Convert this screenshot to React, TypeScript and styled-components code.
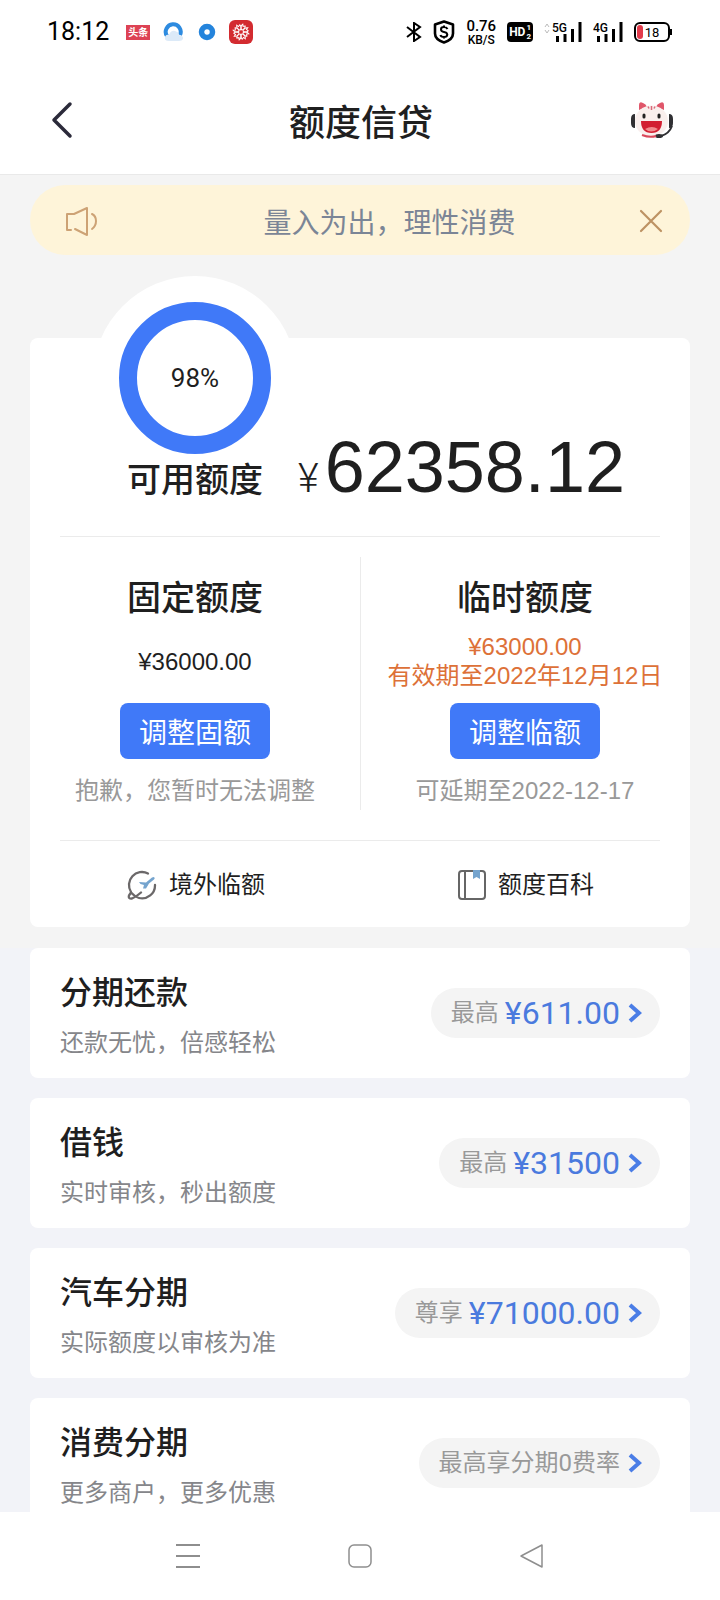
import React from "react";
import styled, { createGlobalStyle } from "styled-components";

const sans = `"Liberation Sans", "Noto Sans CJK SC", sans-serif`;
const ui = `Roboto, "Noto Sans CJK SC", sans-serif`;

const GlobalStyle = createGlobalStyle`
  *, *::before, *::after { box-sizing: border-box; }
  body { margin: 0; background: #f4f4f4; color: #1f1f1f; font-family: ${sans}; }
  button { margin: 0; padding: 0; border: 0; background: none; color: inherit; font: inherit; cursor: pointer; }
  a { color: inherit; text-decoration: none; }
  h1, h2, h3, p { margin: 0; font-weight: 400; }
  svg { display: block; flex: none; }
`;

const Screen = styled.div`
  display: flex;
  flex-direction: column;
  height: 100vh;
`;

const StatusBar = styled.header`
  display: flex;
  justify-content: space-between;
  align-items: center;
  flex: none;
  height: 64px;
  padding: 0 50px 0 47px;
  background: #fff;
  color: #000;
  font-family: ${ui};
`;

const StatusGroup = styled.div<{ $gap: number }>`
  display: flex;
  align-items: center;
  gap: ${(p) => p.$gap}px;
`;

const Clock = styled.time`
  font-size: 25px;
  line-height: 32px;
`;

const NewsBadge = styled.span`
  padding: 0 2px;
  background: #dd4254;
  color: #fff;
  font-size: 10px;
  font-weight: 700;
  line-height: 15px;
`;

const NetSpeed = styled.div`
  display: flex;
  flex-direction: column;
  align-items: center;
`;

const SpeedValue = styled.span`
  font-size: 15px;
  font-weight: 500;
  line-height: 15px;
`;

const SpeedUnit = styled.span`
  font-size: 12px;
  font-weight: 500;
  line-height: 12px;
`;

const HdBadge = styled.span`
  display: flex;
  align-items: center;
  gap: 1px;
  height: 20px;
  padding: 0 2px;
  border-radius: 4px;
  background: #000;
  color: #fff;
  font-size: 12px;
  font-weight: 700;
`;

const HdLines = styled.span`
  display: flex;
  flex-direction: column;
  font-size: 8px;
  line-height: 9px;
`;

const Signal = styled.div`
  position: relative;
  display: flex;
  align-items: flex-end;
  justify-content: flex-end;
  width: 30px;
  height: 20px;
`;

const SignalLabel = styled.span`
  position: absolute;
  top: 0;
  left: 0;
  font-size: 12px;
  font-weight: 500;
  line-height: 12px;
`;

const Battery = styled.div`
  position: relative;
  display: flex;
  align-items: center;
  justify-content: center;
  width: 36px;
  height: 20px;
  border: 2px solid #000;
  border-radius: 6px;
  font-size: 13px;

  &::before {
    content: "";
    position: absolute;
    top: 1px;
    bottom: 1px;
    left: 1px;
    width: 6px;
    border-radius: 3px;
    background: #e23b4b;
  }

  &::after {
    content: "";
    position: absolute;
    top: 5px;
    right: -4px;
    width: 2px;
    height: 6px;
    background: #000;
  }
`;

const TitleBar = styled.div`
  display: grid;
  grid-template-columns: 1fr auto 1fr;
  align-items: center;
  flex: none;
  height: 111px;
  padding: 2px 46px 0 48px;
  border-bottom: 1px solid #e9e9e9;
  background: #fff;
`;

const PageTitle = styled.h1`
  padding-top: 8px;
  font-size: 36px;
  font-weight: 500;
  line-height: 44px;
`;

const IconButton = styled.button<{ $align?: "start" | "center" | "end" }>`
  justify-self: ${(p) => p.$align ?? "center"};
`;

const Content = styled.main`
  flex: 1;
  min-height: 0;
  overflow: hidden;
  background: #f2f3f8;
`;

const Overview = styled.div`
  padding: 10px 30px 21px;
  background: #f4f4f4;
`;

const Notice = styled.div`
  display: flex;
  align-items: center;
  height: 70px;
  padding: 2px 26px 0 35px;
  border-radius: 35px;
  background: #fef4d9;
  color: #7b8596;
`;

const NoticeText = styled.p`
  flex: 1;
  padding: 6px 0 0 42px;
  font-size: 28px;
  line-height: 40px;
  text-align: center;
`;

const QuotaCard = styled.section`
  isolation: isolate;
  margin-top: 83px;
  border-radius: 8px;
  background: #fff;
`;

const Summary = styled.div`
  display: grid;
  grid-template-columns: 152px auto;
  justify-content: start;
  align-items: baseline;
  column-gap: 27px;
  padding: 0 30px 36px 89px;
`;

const Ring = styled.div`
  position: relative;
  grid-column: 1 / -1;
  display: flex;
  align-items: center;
  justify-content: center;
  width: 152px;
  height: 152px;
  margin: -36px 0 -7px;
  border: 18px solid #4079f8;
  border-radius: 50%;
  font-family: ${ui};
  font-size: 26px;

  &::before {
    content: "";
    position: absolute;
    z-index: -1;
    inset: -44px;
    border-radius: 50%;
    background: #fff;
  }
`;

const QuotaTitle = styled.h2`
  font-size: 34px;
  font-weight: 500;
  line-height: 40px;
  text-align: center;
  white-space: nowrap;
`;

const Amount = styled.p`
  font-size: 72px;
  line-height: 40px;
  white-space: nowrap;
`;

const Currency = styled.span`
  margin-right: 6px;
  font-family: ${ui};
  font-size: 40px;
  font-weight: 300;
`;

const Rule = styled.hr`
  height: 1px;
  margin: 0 30px;
  border: 0;
  background: #ebebeb;
`;

const Split = styled.div`
  position: relative;
  display: grid;
  grid-template-columns: 1fr 1fr;
  padding: 41px 0 33px;

  &::after {
    content: "";
    position: absolute;
    top: 20px;
    bottom: 30px;
    left: 50%;
    width: 1px;
    background: #ebebeb;
  }
`;

const QuotaColumn = styled.div`
  display: flex;
  flex-direction: column;
  align-items: center;
`;

const QuotaValue = styled.p<{ $accent?: boolean }>`
  display: flex;
  flex-direction: column;
  align-items: center;
  justify-content: center;
  height: 58px;
  margin: 14px 0 13px;
  color: ${(p) => (p.$accent ? "#dd7138" : "#1f1f1f")};
  font-size: 24px;
  line-height: 29px;
  white-space: nowrap;
`;

const AdjustButton = styled.button`
  width: 150px;
  height: 56px;
  padding-top: 5px;
  border-radius: 8px;
  background: #4079f8;
  color: #fff;
  font-size: 28px;
  line-height: 40px;
`;

const Hint = styled.p`
  margin-top: 16px;
  color: #999;
  font-size: 24px;
  line-height: 32px;
`;

const Shortcuts = styled.nav`
  display: grid;
  grid-template-columns: 1fr 1fr;
`;

const Shortcut = styled.a`
  display: flex;
  align-items: center;
  justify-content: center;
  gap: 12px;
  height: 86px;
  padding: 2px 0 0 2px;
  font-size: 24px;
  line-height: 32px;
`;

const ProductList = styled.div`
  display: flex;
  flex-direction: column;
  gap: 20px;
  padding: 0 30px 20px;
`;

const ProductCard = styled.article`
  display: flex;
  align-items: center;
  justify-content: space-between;
  height: 130px;
  padding: 0 30px;
  border-radius: 8px;
  background: #fff;
`;

const ProductText = styled.div`
  padding-top: 4px;
`;

const ProductName = styled.h3`
  font-size: 32px;
  font-weight: 500;
  line-height: 44px;
`;

const ProductNote = styled.p`
  margin-top: 12px;
  color: #85868a;
  font-size: 24px;
  line-height: 32px;
`;

const OfferPill = styled.a`
  display: flex;
  align-items: center;
  height: 50px;
  padding: 0 18px 0 20px;
  border-radius: 25px;
  background: #f4f4f4;
  color: #999;
  font-family: ${ui};
  font-size: 24px;
  line-height: 32px;
`;

const OfferAmount = styled.strong`
  margin-left: 6px;
  color: #4a7ade;
  font-size: 32px;
  font-weight: 400;
`;

const PillArrow = styled.svg`
  margin-left: 8px;
`;

const SystemNav = styled.nav`
  display: grid;
  grid-template-columns: repeat(3, 172px);
  justify-content: center;
  align-items: center;
  flex: none;
  height: 88px;
  background: #fff;
`;

const Bars = () => (
  <svg width="26" height="20" viewBox="0 0 26 20">
    <path d="M1.500 14v6M9 12v8M16.500 7v13M24 0v20" stroke="#000" strokeWidth="3" />
  </svg>
);

const BrowserIcon = () => (
  <svg width="22" height="22" viewBox="0 0 22 22">
    <path d="M4 15A7.500 7.500 0 1 1 17 14" fill="none" stroke="#2d8be0" strokeWidth="4" />
    <path d="M6 20q-5 0-4-4 1-3 4-2 2-5 6-4 4 1 4 4 5 1 4 4-1 2-4 2z" fill="#dceaf8" />
  </svg>
);

const DotIcon = () => (
  <svg width="18" height="18" viewBox="0 0 18 18">
    <circle cx="9" cy="9" r="5.500" fill="none" stroke="#2484dc" strokeWidth="5.500" />
  </svg>
);

const HuaweiIcon = () => (
  <svg width="24" height="24" viewBox="0 0 24 24">
    <rect width="24" height="24" rx="6" fill="#d32b30" />
    <g fill="none" stroke="#fff" strokeWidth="1">
      {[20, 65, 110, 155, 200, 245, 290, 335].map((angle) => (
        <path key={angle} d="M12 10q-3-3-1-6l1 2 2-1q1 3-2 5" transform={`rotate(${angle} 12 12)`} />
      ))}
    </g>
  </svg>
);

const BluetoothIcon = () => (
  <svg width="16" height="20" viewBox="0 0 16 20" fill="none" stroke="#000" strokeWidth="2">
    <path d="M1 5l13 10-6 4V1l6 4L1 15" />
  </svg>
);

const ShieldIcon = () => (
  <svg width="22" height="24" viewBox="0 0 22 24" fill="none" stroke="#000">
    <path d="M11 1.500l9 3v9q0 6-9 9-9-3-9-9v-9z" strokeWidth="2.600" strokeLinejoin="round" />
    <path d="M14.500 9q-1-2-3.500-2-3 0-3 2.300T11 12t3.300 2.600Q14 17 11 17t-3.600-2M11 5.500V7M11 17v1.500" strokeWidth="2" />
  </svg>
);

const BackIcon = () => (
  <svg width="28" height="40" viewBox="0 0 28 40">
    <path d="M22 4L6 20l16 16" fill="none" stroke="#2b2a3a" strokeWidth="3.500" strokeLinecap="round" strokeLinejoin="round" />
  </svg>
);

const MascotIcon = () => (
  <svg width="44" height="38" viewBox="0 0 44 38">
    <path d="M9 9V4q0-4 4-2 3 1 4 4zM34 9V4q0-4-4-2-3 1-4 4z" fill="#e0566a" />
    <ellipse cx="21.500" cy="20" rx="16.500" ry="15.500" fill="#f9efed" />
    <path d="M18 5.500l1 2M21.500 5v4M25 5.500l-1 2" stroke="#d9697a" strokeWidth="1.500" />
    <path d="M5 13q-4 0-4 5v4q0 5 4 5zM39 13q4 0 4 5v4q0 5-4 5z" fill="#303033" />
    <path d="M42 25q-3 8-11 10" fill="none" stroke="#303033" strokeWidth="2" />
    <ellipse cx="29" cy="35" rx="4" ry="2" fill="#303033" />
    <path d="M14 14v2M29 14v2" stroke="#222" strokeWidth="3" strokeLinecap="round" />
    <path d="M11 20h21q0 12-10.500 12T11 20z" fill="#d21e31" />
    <path d="M15 28q7-4 13 0-7 5-13 0z" fill="#f08b8d" />
    <path d="M12 34q8 3 14 1" fill="none" stroke="#d9485a" strokeWidth="2" />
  </svg>
);

const SpeakerIcon = () => (
  <svg width="34" height="32" viewBox="0 0 34 32" fill="none" stroke="#cda275" strokeWidth="2" strokeLinecap="round" strokeLinejoin="round">
    <path d="M6 25H2V9h7l13-6v27L10 24" />
    <path d="M27 9q4 2 4 7t-4 8" />
  </svg>
);

const CloseIcon = () => (
  <svg width="26" height="26" viewBox="0 0 26 26">
    <path d="M3 3l20 20M23 3L3 23" stroke="#bd9263" strokeWidth="2.200" strokeLinecap="round" />
  </svg>
);

const GlobeIcon = () => (
  <svg width="30" height="30" viewBox="0 0 30 30" fill="none" strokeLinecap="round" strokeLinejoin="round">
    <path d="M21 3.500A13 13 0 0 0 4 22" stroke="#6b6869" strokeWidth="2.300" />
    <path d="M14 22.500Q9 27 5 28.500 1 29 2 25.500L4 22.500Q8 27 12 28A13 13 0 0 0 28 15" stroke="#6b6869" strokeWidth="2.300" />
    <path d="M27 7q1.500 1 0 2.500l-5 4-3 5h-3l1-3.500-3.500-1-1.500-2 7 .500 6-5z" fill="#75a4ce" />
  </svg>
);

const BookIcon = () => (
  <svg width="28" height="30" viewBox="0 0 28 30" fill="none" stroke="#666" strokeWidth="2">
    <rect x="1" y="1" width="26" height="28" rx="3" />
    <path d="M7 1v28" />
    <path d="M15 0h7v9l-3.500-2-3.500 2z" fill="#75a4ce" stroke="none" />
  </svg>
);

type Product = { name: string; note: string; label: string; amount?: string };

const products: Product[] = [
  { name: "分期还款", note: "还款无忧，倍感轻松", label: "最高", amount: "¥611.00" },
  { name: "借钱", note: "实时审核，秒出额度", label: "最高", amount: "¥31500" },
  { name: "汽车分期", note: "实际额度以审核为准", label: "尊享", amount: "¥71000.00" },
  { name: "消费分期", note: "更多商户，更多优惠", label: "最高享分期0费率" },
];

export default function App() {
  return (
    <>
      <GlobalStyle />
      <Screen lang="zh-CN">
        <StatusBar>
          <StatusGroup $gap={17}>
            <Clock>18:12</Clock>
            <StatusGroup $gap={13}>
              <NewsBadge>头条</NewsBadge>
              <BrowserIcon />
              <DotIcon />
              <HuaweiIcon />
            </StatusGroup>
          </StatusGroup>
          <StatusGroup $gap={11}>
            <BluetoothIcon />
            <ShieldIcon />
            <NetSpeed>
              <SpeedValue>0.76</SpeedValue>
              <SpeedUnit>KB/S</SpeedUnit>
            </NetSpeed>
            <HdBadge>
              HD
              <HdLines>
                <span>1</span>
                <span>2</span>
              </HdLines>
            </HdBadge>
            <StatusGroup $gap={2}>
              <svg width="6" height="20" viewBox="0 0 6 20" fill="none" stroke="#bbb">
                <path d="M1 5l2-3 2 3M1 8l2 3 2-3" />
              </svg>
              <Signal>
                <SignalLabel>5G</SignalLabel>
                <Bars />
              </Signal>
            </StatusGroup>
            <Signal>
              <SignalLabel>4G</SignalLabel>
              <Bars />
            </Signal>
            <Battery>18</Battery>
          </StatusGroup>
        </StatusBar>
        <TitleBar>
          <IconButton $align="start" aria-label="返回">
            <BackIcon />
          </IconButton>
          <PageTitle>额度信贷</PageTitle>
          <IconButton $align="end" aria-label="客服">
            <MascotIcon />
          </IconButton>
        </TitleBar>
        <Content>
          <Overview>
            <Notice>
              <SpeakerIcon />
              <NoticeText>量入为出，理性消费</NoticeText>
              <IconButton aria-label="关闭">
                <CloseIcon />
              </IconButton>
            </Notice>
            <QuotaCard>
              <Summary>
                <Ring>98%</Ring>
                <QuotaTitle>可用额度</QuotaTitle>
                <Amount>
                  <Currency>¥</Currency>62358.12
                </Amount>
              </Summary>
              <Rule />
              <Split>
                <QuotaColumn>
                  <QuotaTitle>固定额度</QuotaTitle>
                  <QuotaValue>¥36000.00</QuotaValue>
                  <AdjustButton>调整固额</AdjustButton>
                  <Hint>抱歉，您暂时无法调整</Hint>
                </QuotaColumn>
                <QuotaColumn>
                  <QuotaTitle>临时额度</QuotaTitle>
                  <QuotaValue $accent>
                    <span>¥63000.00</span>
                    <span>有效期至2022年12月12日</span>
                  </QuotaValue>
                  <AdjustButton>调整临额</AdjustButton>
                  <Hint>可延期至2022-12-17</Hint>
                </QuotaColumn>
              </Split>
              <Rule />
              <Shortcuts>
                <Shortcut href="#overseas">
                  <GlobeIcon />
                  境外临额
                </Shortcut>
                <Shortcut href="#guide">
                  <BookIcon />
                  额度百科
                </Shortcut>
              </Shortcuts>
            </QuotaCard>
          </Overview>
          <ProductList>
            {products.map((product) => (
              <ProductCard key={product.name}>
                <ProductText>
                  <ProductName>{product.name}</ProductName>
                  <ProductNote>{product.note}</ProductNote>
                </ProductText>
                <OfferPill href="#offer">
                  {product.label}
                  {product.amount && <OfferAmount>{product.amount}</OfferAmount>}
                  <PillArrow width="14" height="20" viewBox="0 0 14 20">
                    <path d="M2 2l9 8-9 8" fill="none" stroke="#4a7de6" strokeWidth="4" />
                  </PillArrow>
                </OfferPill>
              </ProductCard>
            ))}
          </ProductList>
        </Content>
        <SystemNav>
          <IconButton aria-label="最近任务">
            <svg width="26" height="26" viewBox="0 0 26 26">
              <path d="M1 2h24M1 13h24M1 24h24" stroke="#8e8e8e" strokeWidth="2" />
            </svg>
          </IconButton>
          <IconButton aria-label="主屏幕">
            <svg width="26" height="26" viewBox="0 0 26 26">
              <rect x="2" y="2" width="22" height="22" rx="5" fill="none" stroke="#8e8e8e" strokeWidth="1.500" />
            </svg>
          </IconButton>
          <IconButton aria-label="后退">
            <svg width="26" height="26" viewBox="0 0 26 26">
              <path d="M23 2v22L2 13z" fill="none" stroke="#8e8e8e" strokeWidth="1.500" strokeLinejoin="round" />
            </svg>
          </IconButton>
        </SystemNav>
      </Screen>
    </>
  );
}
